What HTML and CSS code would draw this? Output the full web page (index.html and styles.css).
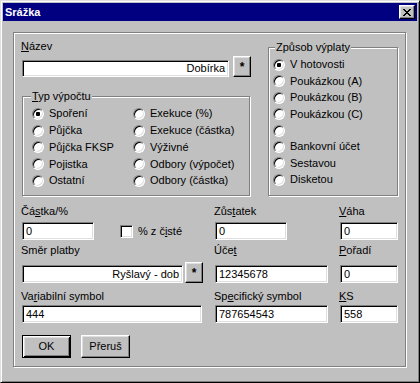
FILE: index.html
```html
<!DOCTYPE html>
<html lang="cs">
<head>
    <meta charset="UTF-8">
    <title>Srážka</title>
    <link rel="stylesheet" href="styles.css">
</head>
<body>

    <div class="window">

        <div class="titlebar">
            <span class="title">Srážka</span>
            <div class="close">
                <svg width="8" height="7" viewBox="0 0 8 7"><path d="M0 0h2l2 2.5 2-2.5h2l-3 3.5 3 3.5h-2l-2-2.5-2 2.5h-2l3-3.5z" fill="#000" shape-rendering="crispEdges"/></svg>
            </div>
        </div>

        <div class="panel">

            <div class="top">
                <div class="left-col">
                    <div class="label"><u>N</u>ázev</div>
                    <div class="field-row">
                        <div class="field field-name right">Dobírka</div>
                        <div class="btn btn-star">*</div>
                    </div>

                    <div class="group group-typ">
                        <span class="caption"><u>T</u>yp výpočtu</span>
                        <div class="radio-grid">
                            <div class="radio checked">Spoření</div>
                            <div class="radio">Půjčka</div>
                            <div class="radio">Půjčka FKSP</div>
                            <div class="radio">Pojistka</div>
                            <div class="radio">Ostatní</div>
                            <div class="radio">Exekuce (%)</div>
                            <div class="radio">Exekuce (částka)</div>
                            <div class="radio">Výživné</div>
                            <div class="radio">Odbory (výpočet)</div>
                            <div class="radio">Odbory (částka)</div>
                        </div>
                    </div>
                </div>

                <div class="group group-zpusob">
                    <span class="caption">Způsob výplaty</span>
                    <div class="radio-list">
                        <div class="radio checked">V hotovosti</div>
                        <div class="radio">Poukázkou (A)</div>
                        <div class="radio">Poukázkou (B)</div>
                        <div class="radio">Poukázkou (C)</div>
                        <div class="radio"></div>
                        <div class="radio">Bankovní účet</div>
                        <div class="radio">Sestavou</div>
                        <div class="radio">Disketou</div>
                    </div>
                </div>
            </div>

            <div class="fields">
                <div class="cell">
                    <div class="label">Čá<u>s</u>tka/%</div>
                    <div class="ctrl">
                        <div class="field w-castka">0</div>
                        <span class="checkbox"></span>
                        <span>% z č<u>i</u>sté</span>
                    </div>
                </div>
                <div class="cell">
                    <div class="label">Zůs<u>t</u>atek</div>
                    <div class="ctrl"><div class="field w-zustatek">0</div></div>
                </div>
                <div class="cell">
                    <div class="label"><u>V</u>áha</div>
                    <div class="ctrl"><div class="field w-small">0</div></div>
                </div>

                <div class="cell row2">
                    <div class="label">Směr platby</div>
                    <div class="ctrl ctrl-tall">
                        <div class="field w-smer right">Ryšlavý - dob</div>
                        <div class="btn btn-star">*</div>
                    </div>
                </div>
                <div class="cell row2">
                    <div class="label">Úče<u>t</u></div>
                    <div class="ctrl ctrl-tall"><div class="field w-ucet">12345678</div></div>
                </div>
                <div class="cell row2">
                    <div class="label"><u>P</u>ořadí</div>
                    <div class="ctrl ctrl-tall"><div class="field w-small">0</div></div>
                </div>

                <div class="cell row3">
                    <div class="label">Va<u>r</u>iabilní symbol</div>
                    <div class="ctrl"><div class="field w-var">444</div></div>
                </div>
                <div class="cell row3">
                    <div class="label">Sp<u>e</u>cifický symbol</div>
                    <div class="ctrl"><div class="field w-ucet">787654543</div></div>
                </div>
                <div class="cell row3">
                    <div class="label"><u>K</u>S</div>
                    <div class="ctrl"><div class="field w-small">558</div></div>
                </div>
            </div>

            <div class="buttons">
                <div class="btn btn-push default">OK</div>
                <div class="btn btn-push">Přeruš</div>
            </div>

        </div>
    </div>

</body>
</html>
```

FILE: styles.css
```css
body {
    margin: 0;
    padding: 0;
    background-color: #c0c0c0;
    font-family: "Liberation Sans", Arial, sans-serif;
    font-size: 11px;
    line-height: 13px;
    color: #000;
}
u {
    text-decoration: underline;
    text-underline-offset: 1px;
}
.window {
    box-sizing: border-box;
    width: 420px;
    height: 383px;
    padding: 2px;
    background-color: #c0c0c0;
    border: 1px solid;
    border-color: #dfdfdf #000 #000 #dfdfdf;
    box-shadow: inset 1px 1px 0 #fff, inset -1px -1px 0 #808080;
}
.titlebar {
    height: 18px;
    background-color: #000080;
    display: flex;
    align-items: center;
    justify-content: space-between;
    padding: 0 2px;
}
.title {
    color: #fff;
    font-weight: bold;
    line-height: 18px;
}
.close {
    box-sizing: border-box;
    width: 16px;
    height: 14px;
    display: flex;
    align-items: center;
    justify-content: center;
    background-color: #c0c0c0;
    border: 1px solid;
    border-color: #fff #000 #000 #fff;
    box-shadow: inset -1px -1px 0 #808080, inset 1px 1px 0 #dfdfdf;
}

/* etched frames */
.panel, .group {
    box-sizing: border-box;
    border: 1px solid #808080;
    box-shadow: 1px 1px 0 #fff, inset 1px 1px 0 #fff;
}
.panel {
    width: 393px;
    height: 335px;
    margin: 11px 0 0 10px;
    padding: 7px 7px 0 8px;
}
.group {
    position: relative;
}
.caption {
    position: absolute;
    top: -7px;
    background-color: #c0c0c0;
    padding: 0 1px;
    white-space: nowrap;
}
.label {
    margin-left: -1px;
    white-space: nowrap;
}

.top {
    display: flex;
    gap: 17px;
}
.left-col {
    width: 229px;
}
.field-row {
    display: flex;
    align-items: flex-end;
    gap: 4px;
    margin-top: 3px;
}
.group-typ {
    width: 228px;
    height: 100px;
    margin-top: 19px;
    padding: 8.5px 0 0 9px;
}
.group-typ .caption { left: 8px; }
.group-zpusob {
    width: 130px;
    height: 149px;
    margin-top: 7px;
    padding: 8.8px 0 0 4px;
}
.group-zpusob .caption { left: 6px; }

.radio-grid {
    display: grid;
    grid-template-columns: 101px 1fr;
    grid-template-rows: repeat(5, 16.75px);
    grid-auto-flow: column;
}
.radio-list {
    display: grid;
    grid-template-rows: repeat(8, 16.4px);
}
.radio {
    display: flex;
    align-items: center;
    white-space: nowrap;
}
.radio::before {
    content: "";
    box-sizing: border-box;
    flex: none;
    width: 12px;
    height: 12px;
    margin-right: 5px;
    border-radius: 50%;
    border: 1px solid;
    border-color: #808080 #fff #fff #808080;
    box-shadow: inset 1px 1px 0 #000, inset -1px -1px 0 #dfdfdf;
    background-color: #fff;
}
.radio.checked::before {
    background: radial-gradient(circle, #000 0, #000 2px, #fff 2.5px);
}

/* text boxes */
.field {
    box-sizing: border-box;
    height: 18px;
    padding: 0 3px;
    line-height: 16px;
    background-color: #fff;
    border: 1px solid;
    border-color: #808080 #fff #fff #808080;
    box-shadow: inset 1px 1px 0 #000, inset -1px -1px 0 #dfdfdf;
    white-space: nowrap;
    overflow: hidden;
}
.field.right { text-align: right; }
.field-name { width: 208px; height: 17px; line-height: 15px; }
.w-castka { width: 72px; }
.w-zustatek { width: 72px; }
.w-small { width: 58px; }
.w-smer { width: 161px; }
.w-ucet { width: 113px; }
.w-var { width: 180px; }

.btn {
    box-sizing: border-box;
    display: flex;
    align-items: center;
    justify-content: center;
    background-color: #c0c0c0;
    border: 1px solid;
    border-color: #fff #000 #000 #fff;
    box-shadow: inset -1px -1px 0 #808080, inset 1px 1px 0 #dfdfdf;
}
.btn-star {
    width: 18px;
    height: 21px;
    font-size: 12px;
    font-weight: bold;
    padding-top: 2px;
}

.checkbox {
    box-sizing: border-box;
    width: 13px;
    height: 13px;
    margin: 0 5px 0 26px;
    background-color: #fff;
    border: 1px solid;
    border-color: #808080 #fff #fff #808080;
    box-shadow: inset 1px 1px 0 #000, inset -1px -1px 0 #dfdfdf;
}

.fields {
    display: grid;
    grid-template-columns: 193px 125px 58px;
    margin-top: 9px;
}
.cell .label {
    margin-bottom: 4px;
}
.ctrl {
    display: flex;
    align-items: center;
}
.ctrl-tall {
    align-items: flex-end;
    height: 21px;
    gap: 2px;
}
.row2 { margin-top: 4px; }
.row2 .label { margin-bottom: 5px; }
.row3 { margin-top: 7px; }
.row3 .label { margin-bottom: 2px; }

.buttons {
    display: flex;
    gap: 10px;
    margin-top: 12px;
}
.btn-push {
    width: 49px;
    height: 23px;
}
.btn-push.default {
    border-color: #000;
    box-shadow: inset 1px 1px 0 #fff, inset -1px -1px 0 #000, inset 2px 2px 0 #dfdfdf, inset -2px -2px 0 #808080;
}
```
